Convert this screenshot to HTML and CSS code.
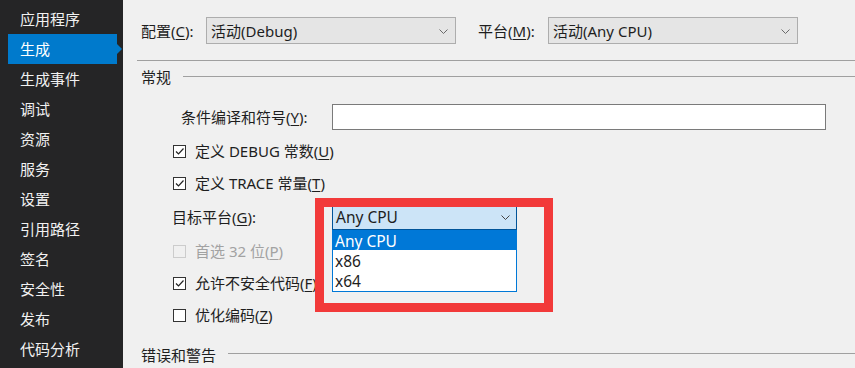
FILE: index.html
```html
<!DOCTYPE html>
<html lang="zh-CN">
<head>
<meta charset="utf-8">
<title>属性</title>
<link rel="stylesheet" href="styles.css">
</head>
<body>
<div class="app">
  <nav class="sidebar">
    <div class="nav-item">应用程序</div>
    <div class="nav-item active">生成</div>
    <div class="nav-item">生成事件</div>
    <div class="nav-item">调试</div>
    <div class="nav-item">资源</div>
    <div class="nav-item">服务</div>
    <div class="nav-item">设置</div>
    <div class="nav-item">引用路径</div>
    <div class="nav-item">签名</div>
    <div class="nav-item">安全性</div>
    <div class="nav-item">发布</div>
    <div class="nav-item">代码分析</div>
  </nav>
  <main class="main">
    <div class="toolbar">
      <span class="tb-label">配置(<u>C</u>):</span>
      <div class="select"><span>活动(Debug)</span><svg class="chev" width="9" height="5" viewBox="0 0 9 5"><path d="M0.5 0.5 L4.5 4.5 L8.5 0.5" fill="none" stroke="#6a6a6a" stroke-width="1"/></svg></div>
      <span class="tb-label tb-label2">平台(<u>M</u>):</span>
      <div class="select"><span>活动(Any CPU)</span><svg class="chev" width="9" height="5" viewBox="0 0 9 5"><path d="M0.5 0.5 L4.5 4.5 L8.5 0.5" fill="none" stroke="#6a6a6a" stroke-width="1"/></svg></div>
    </div>
    <div class="sep"></div>
    <div class="group-head"><span>常规</span><div class="group-line"></div></div>

    <div class="row row-input">
      <span class="lbl-sym">条件编译和符号(<u>Y</u>):</span>
      <div class="textbox"></div>
    </div>
    <div class="row row-cb">
      <span class="cb checked"><svg width="11" height="11" viewBox="0 0 11 11"><path d="M2 5.5 L4.5 8 L9.5 2.5" fill="none" stroke="#222" stroke-width="1.2"/></svg></span>
      <span>定义 DEBUG 常数(<u>U</u>)</span>
    </div>
    <div class="row row-cb">
      <span class="cb checked"><svg width="11" height="11" viewBox="0 0 11 11"><path d="M2 5.5 L4.5 8 L9.5 2.5" fill="none" stroke="#222" stroke-width="1.2"/></svg></span>
      <span>定义 TRACE 常量(<u>T</u>)</span>
    </div>
    <div class="row row-target">
      <span class="lbl-target">目标平台(<u>G</u>):</span>
      <div class="combo-wrap">
        <div class="combo"><span>Any CPU</span><svg class="chev2" width="9" height="5" viewBox="0 0 9 5"><path d="M0.5 0.5 L4.5 4.5 L8.5 0.5" fill="none" stroke="#444" stroke-width="1"/></svg></div>
        <ul class="combo-list">
          <li class="sel">Any CPU</li>
          <li>x86</li>
          <li>x64</li>
        </ul>
        <div class="highlight"></div>
      </div>
    </div>
    <div class="row row-cb disabled">
      <span class="cb"></span>
      <span>首选 32 位(<u>P</u>)</span>
    </div>
    <div class="row row-cb">
      <span class="cb checked"><svg width="11" height="11" viewBox="0 0 11 11"><path d="M2 5.5 L4.5 8 L9.5 2.5" fill="none" stroke="#222" stroke-width="1.2"/></svg></span>
      <span>允许不安全代码(<u>F</u>)</span>
    </div>
    <div class="row row-cb">
      <span class="cb"></span>
      <span>优化编码(<u>Z</u>)</span>
    </div>
    <div class="group-head group-head2"><span>错误和警告</span><div class="group-line"></div></div>
  </main>
</div>
</body>
</html>
```
FILE: styles.css
```css
html, body {
  margin: 0;
  padding: 0;
  width: 855px;
  height: 368px;
  overflow: hidden;
}
body {
  font-family: "Noto Sans", "Noto Sans CJK SC", sans-serif;
  font-size: 15px;
  color: #1e1e1e;
  background: #f0f0f0;
}
u { text-decoration: underline; text-underline-offset: 2px; text-decoration-thickness: 1px; }

.app {
  display: flex;
  height: 368px;
}

.sidebar {
  width: 123px;
  flex: none;
  background: #252526;
  padding-top: 4px;
  box-sizing: border-box;
}
.nav-item {
  height: 30px;
  line-height: 30px;
  padding-left: 20px;
  color: #f1f1f1;
  font-size: 15px;
  position: relative;
}
.nav-item.active {
  margin-left: 8px;
  width: 109px;
  padding-left: 12px;
  box-sizing: border-box;
  background: #007acc;
  color: #fff;
}
.nav-item.active::after {
  content: "";
  position: absolute;
  right: -5px;
  top: 10px;
  border-top: 5px solid transparent;
  border-bottom: 5px solid transparent;
  border-left: 5px solid #007acc;
}

.main {
  flex: 1;
  padding: 17px 0 0 18px;
  box-sizing: border-box;
  position: relative;
}

.toolbar {
  display: flex;
  align-items: center;
  height: 27px;
}
.tb-label {
  width: 65px;
  flex: none;
  line-height: 20px;
}
.tb-label2 {
  margin-left: 22px;
  width: 70px;
}
.select {
  width: 250px;
  height: 27px;
  box-sizing: border-box;
  background: #e5e5e5;
  border: 1px solid #adadad;
  display: flex;
  align-items: center;
  justify-content: space-between;
  padding: 0 7px 0 4px;
}
.chev { margin-top: 1px; }

.sep {
  height: 1px;
  background: #a0a0a0;
  margin: 16px 0 0 -4px;
}

.group-head {
  display: flex;
  align-items: center;
  height: 20px;
  margin-top: 6px;
}
.group-head span { line-height: 20px; }
.group-line {
  flex: 1;
  height: 1px;
  background: #a0a0a0;
  margin-left: 12px;
  margin-top: -1px;
}
.group-head2 { margin-top: 14px; }
.group-head2 .group-line { margin-left: 12px; margin-top: -4px; }

.row {
  display: flex;
  align-items: center;
}
.row span { line-height: 20px; }

.row-input {
  margin-top: 17px;
  height: 26px;
  padding-left: 40px;
  margin-bottom: 5px;
}
.lbl-sym { width: 151px; flex: none; }
.textbox {
  width: 494px;
  height: 26px;
  box-sizing: border-box;
  background: #fff;
  border: 1px solid #7a7a7a;
}

.row-cb {
  height: 32px;
  padding-left: 32px;
}
.cb {
  width: 13px;
  height: 13px;
  box-sizing: border-box;
  border: 1px solid #333;
  background: #fff;
  margin-right: 9px;
  flex: none;
  display: flex;
  align-items: center;
  justify-content: center;
}
.cb svg { display: block; }
.disabled { color: #a2a2a2; }
.disabled .cb { border-color: #cccccc; background: #f0f0f0; }

.row-target {
  height: 36px;
  padding-left: 31px;
}
.lbl-target { width: 160px; flex: none; }

.combo-wrap {
  position: relative;
  width: 185px;
  height: 25px;
  font-size: 15.5px;
}
.combo {
  height: 25px;
  box-sizing: border-box;
  background: #cce4f7;
  border: 1px solid #005499;
  display: flex;
  align-items: center;
  justify-content: space-between;
  padding: 0 6px 0 3px;
}
.combo span { line-height: 20px; }
.combo-list {
  position: absolute;
  left: 0;
  top: 25px;
  width: 185px;
  box-sizing: border-box;
  margin: 0;
  padding: 0 0 1px;
  list-style: none;
  background: #fff;
  border: 1px solid #0078d7;
  border-top: none;
  z-index: 2;
}
.combo-list li {
  height: 20px;
  line-height: 23px;
  padding-left: 2px;
}
.combo-list li.sel {
  background: #0078d7;
  color: #fff;
}
.highlight {
  position: absolute;
  left: -17px;
  top: -7px;
  width: 238px;
  height: 114px;
  box-sizing: border-box;
  border: 9px solid #f23a3a;
  z-index: 3;
}
```
